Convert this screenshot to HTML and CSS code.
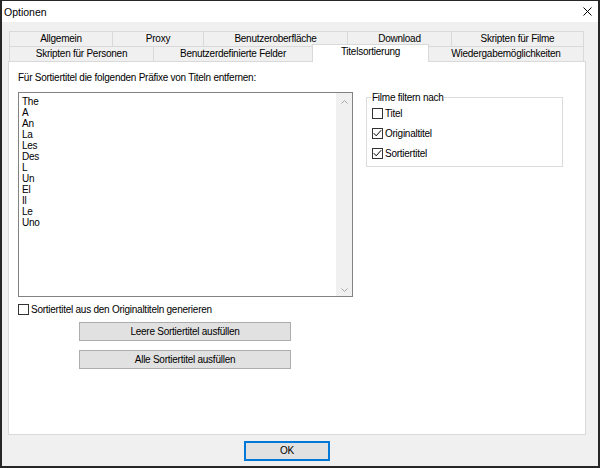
FILE: index.html
```html
<!DOCTYPE html>
<html lang="de">
<head>
<meta charset="utf-8">
<title>Optionen</title>
<link rel="stylesheet" href="styles.css">
</head>
<body>
<div class="window">
  <div class="titlebar">
    <span class="title">Optionen</span>
    <svg class="close" width="9" height="9" viewBox="0 0 9 9"><path d="M0.5 0.5 L8.5 8.5 M8.5 0.5 L0.5 8.5" stroke="#000" stroke-width="1" fill="none"/></svg>
  </div>
  <div class="content">
    <div class="tabs">
      <div class="tab-row">
        <div class="tab t-allgemein">Allgemein</div>
        <div class="tab t-proxy">Proxy</div>
        <div class="tab t-oberflaeche">Benutzeroberfläche</div>
        <div class="tab t-download">Download</div>
        <div class="tab t-filme">Skripten für Filme</div>
      </div>
      <div class="tab-row tab-row-2">
        <div class="tab t-personen">Skripten für Personen</div>
        <div class="tab t-felder">Benutzerdefinierte Felder</div>
        <div class="tab tab-active t-titel">Titelsortierung</div>
        <div class="tab t-wiedergabe">Wiedergabemöglichkeiten</div>
      </div>
    </div>
    <div class="panel">
      <div class="label">Für Sortiertitel die folgenden Präfixe von Titeln entfernen:</div>
      <div class="main-row">
        <div class="listbox">
          <ul class="items">
            <li>The</li>
            <li>A</li>
            <li>An</li>
            <li>La</li>
            <li>Les</li>
            <li>Des</li>
            <li>L</li>
            <li>Un</li>
            <li>El</li>
            <li>Il</li>
            <li>Le</li>
            <li>Uno</li>
          </ul>
          <div class="scrollbar">
            <svg width="7" height="4" viewBox="0 0 7 4"><path d="M0.5 3.5 L3.5 0.5 L6.5 3.5" stroke="#a6a6a6" fill="none"/></svg>
            <svg width="7" height="4" viewBox="0 0 7 4"><path d="M0.5 0.5 L3.5 3.5 L6.5 0.5" stroke="#a6a6a6" fill="none"/></svg>
          </div>
        </div>
        <div class="group">
          <div class="group-title">Filme filtern nach</div>
          <div class="check-row">
            <span class="box"></span><span>Titel</span>
          </div>
          <div class="check-row">
            <span class="box"><svg width="9" height="9" viewBox="0 0 9 9"><path d="M0.8 4.2 L3.2 6.8 L8.2 1.2" stroke="#000" stroke-width="1" fill="none"/></svg></span><span>Originaltitel</span>
          </div>
          <div class="check-row">
            <span class="box"><svg width="9" height="9" viewBox="0 0 9 9"><path d="M0.8 4.2 L3.2 6.8 L8.2 1.2" stroke="#000" stroke-width="1" fill="none"/></svg></span><span>Sortiertitel</span>
          </div>
        </div>
      </div>
      <div class="check-row single">
        <span class="box"></span><span>Sortiertitel aus den Originaltiteln generieren</span>
      </div>
      <div class="actions">
        <button class="btn wide">Leere Sortiertitel ausfüllen</button>
        <button class="btn wide">Alle Sortiertitel ausfüllen</button>
      </div>
    </div>
    <div class="footer">
      <button class="btn ok">OK</button>
    </div>
  </div>
</div>
</body>
</html>
```

FILE: styles.css
```css
* { box-sizing: border-box; }

html, body {
  margin: 0;
  padding: 0;
  background: #f0f0f0;
}

body {
  font-family: "Liberation Sans", Arial, sans-serif;
  font-size: 10px;
  letter-spacing: -0.25px;
  color: #000;
}

.window {
  width: 600px;
  height: 468px;
  border-style: solid;
  border-color: #262626;
  border-width: 1px 2px 2px 2px;
  background: #f0f0f0;
  display: flex;
  flex-direction: column;
  overflow: hidden;
}

.titlebar {
  height: 21px;
  background: #fff;
  display: flex;
  align-items: center;
  justify-content: space-between;
  padding: 0 6px 0 2px;
}

.title {
  font-size: 10.5px;
  line-height: 12px;
  letter-spacing: 0;
}

.close { display: block; }

.content {
  padding: 9px 12px 0 6px;
  display: flex;
  flex-direction: column;
}

.tabs {
  margin: 0 2px 0 1px;
  display: flex;
  flex-direction: column;
}

.tab-row {
  display: flex;
  align-items: flex-start;
}

.tab-row-2 { margin-top: -1px; }

.tab {
  height: 16px;
  border: 1px solid #d9d9d9;
  background: #f0f0f0;
  margin-left: -1px;
  text-align: center;
  line-height: 14px;
  white-space: nowrap;
}

.tab:first-child { margin-left: 0; }

.t-allgemein { width: 104px; }
.t-proxy { width: 92px; }
.t-oberflaeche { width: 145px; }
.t-download { width: 105px; }
.t-filme { width: 133px; }
.t-personen { width: 145px; }
.t-felder { width: 160px; }
.t-titel { width: 117px; }
.t-wiedergabe { width: 156px; }

.tab-active {
  position: relative;
  z-index: 1;
  background: #fff;
  height: 18px;
  margin-top: -2px;
  border-bottom: none;
  line-height: 14px;
}

.panel {
  margin-top: -1px;
  width: 578px;
  height: 374px;
  border: 1px solid #d9d9d9;
  background: #fff;
  padding: 10px 9px 0 9px;
  display: flex;
  flex-direction: column;
}

.label {
  line-height: 11px;
  margin-bottom: 9px;
}

.main-row {
  display: flex;
  align-items: flex-start;
}

.listbox {
  width: 335px;
  height: 205px;
  border: 1px solid #828282;
  display: flex;
}

.items {
  list-style: none;
  margin: 0;
  padding: 3px 0 0 3px;
  flex: 1;
  line-height: 11px;
}

.scrollbar {
  width: 16px;
  background: #f0f0f0;
  display: flex;
  flex-direction: column;
  justify-content: space-between;
  align-items: center;
  padding: 7px 0 4px 0;
}

.scrollbar svg { display: block; }

.group {
  margin: 5px 0 0 13px;
  width: 197px;
  height: 70px;
  border: 1px solid #dcdcdc;
  padding: 0 5px 3px 5px;
  display: flex;
  flex-direction: column;
}

.group-title {
  align-self: flex-start;
  margin-top: -6px;
  background: #fff;
  line-height: 11px;
}

.check-row {
  height: 20px;
  display: flex;
  align-items: center;
  gap: 2px;
  white-space: nowrap;
}

.box {
  width: 11px;
  height: 11px;
  border: 1px solid #333;
  background: #fff;
  flex: none;
}

.box svg { display: block; }

.check-row.single {
  height: 11px;
  margin-top: 7px;
}

.actions {
  margin: 7px 0 0 61px;
  display: flex;
  flex-direction: column;
  gap: 9px;
}

.btn {
  font-family: inherit;
  font-size: 10px;
  letter-spacing: inherit;
  color: #000;
  background: #e1e1e1;
  border: 1px solid #adadad;
  border-radius: 0;
  padding: 0;
  margin: 0;
  line-height: 12px;
}

.btn.wide {
  width: 212px;
  height: 19px;
}

.footer {
  margin-top: 6px;
  display: flex;
}

.btn.ok {
  margin-left: 236px;
  width: 86px;
  height: 20px;
  border: 2px solid #0078d7;
}
```
